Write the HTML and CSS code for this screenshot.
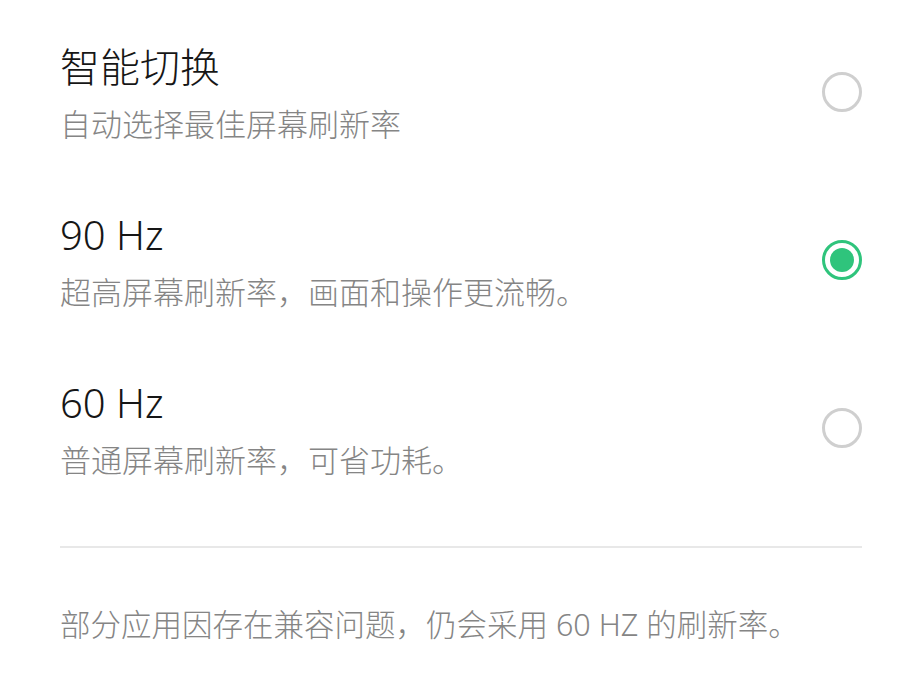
FILE: index.html
```html
<!DOCTYPE html>
<html lang="zh-CN">
<head>
    <meta charset="UTF-8">
    <title>屏幕刷新率</title>
    <link rel="stylesheet" href="styles.css">
</head>
<body>
<div id="wrap">
    <ul class="list">
        <li class="item">
            <div class="info">
                <p class="title">智能切换</p>
                <p class="desc">自动选择最佳屏幕刷新率</p>
            </div>
            <span class="radio"></span>
        </li>
        <li class="item">
            <div class="info">
                <p class="title">90 Hz</p>
                <p class="desc">超高屏幕刷新率，画面和操作更流畅。</p>
            </div>
            <span class="radio on"></span>
        </li>
        <li class="item">
            <div class="info">
                <p class="title">60 Hz</p>
                <p class="desc">普通屏幕刷新率，可省功耗。</p>
            </div>
            <span class="radio"></span>
        </li>
    </ul>
    <div class="line"></div>
    <p class="note">部分应用因存在兼容问题，仍会采用 60 HZ 的刷新率。</p>
</div>
</body>
</html>
```

FILE: styles.css
```css
body, p, ul {
    margin: 0;
    padding: 0;
}

body {
    background: #fff;
    font-family: "Noto Sans", "Noto Sans CJK SC", sans-serif;
}

#wrap {
    width: 920px;
    height: 680px;
    padding: 12px 58px 0 60px;
    box-sizing: border-box;
}

.list {
    list-style: none;
}

.item {
    display: flex;
    align-items: center;
    justify-content: space-between;
    height: 168px;
    padding: 28px 0;
    box-sizing: border-box;
}

.title {
    font-size: 40px;
    line-height: 56px;
    font-weight: 300;
    color: #161616;
}

.desc {
    font-size: 31px;
    line-height: 58px;
    font-weight: 300;
    color: #858585;
}

.radio {
    width: 40px;
    height: 40px;
    box-sizing: border-box;
    border: 3px solid #cfcfcf;
    border-radius: 50%;
    margin-bottom: 8px;
    position: relative;
}

.radio.on {
    border-color: #2fc47c;
}

.radio.on::after {
    content: "";
    position: absolute;
    left: 5px;
    top: 5px;
    width: 24px;
    height: 24px;
    border-radius: 50%;
    background: #2fc47c;
}

.line {
    height: 2px;
    background: #e8e8e8;
    margin-top: 30px;
}

.note {
    margin-top: 52px;
    font-size: 30.5px;
    line-height: 48px;
    font-weight: 300;
    color: #858585;
}
```
